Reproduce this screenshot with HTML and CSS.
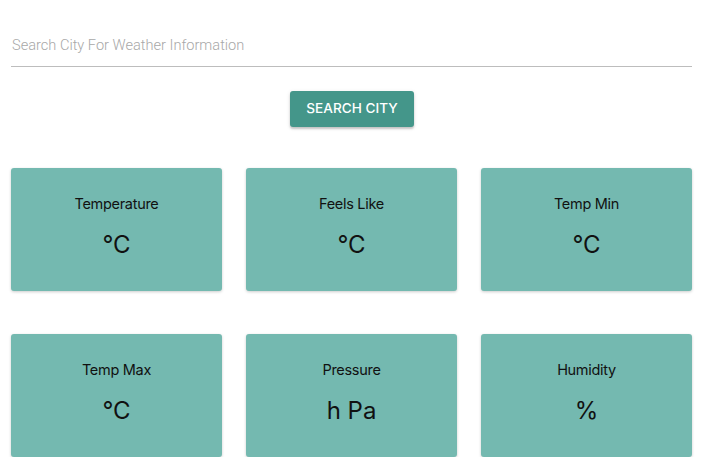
FILE: index.html
```html
<!DOCTYPE html>
<html>
<head>
<meta charset="utf-8">
<link rel="stylesheet" href="styles.css">
</head>
<body>
<div class="page">
  <div class="field">
    <input class="search" type="text" placeholder="Search City For Weather Information">
  </div>
  <div class="actions">
    <button class="btn">SEARCH CITY</button>
  </div>
  <div class="grid">
    <div class="card"><div class="label">Temperature</div><div class="value">°C</div></div>
    <div class="card"><div class="label">Feels Like</div><div class="value">°C</div></div>
    <div class="card"><div class="label">Temp Min</div><div class="value">°C</div></div>
    <div class="card"><div class="label">Temp Max</div><div class="value">°C</div></div>
    <div class="card"><div class="label">Pressure</div><div class="value">h Pa</div></div>
    <div class="card"><div class="label">Humidity</div><div class="value">%</div></div>
  </div>
</div>
</body>
</html>
```
FILE: styles.css
```css
* { box-sizing: border-box; }
body { margin: 0; background: #fff; font-family: Roboto, "Liberation Sans", sans-serif; }
.page { padding: 28px 13px 0 11px; }
.field { border-bottom: 1px solid #bdbdbd; }
.search {
  width: 100%; border: none; outline: none; background: transparent;
  font-family: Roboto, sans-serif; font-size: 14.6px; font-weight: 300; color: #333;
  padding: 8px 0 12px 1px; height: 38px;
}
.search::placeholder { color: #a8a8a8; }
.actions { display: flex; justify-content: center; padding-top: 24px; }
.btn {
  background: #44968a; color: #fff; border: none; border-radius: 3px;
  font-family: Inter, "Liberation Sans", sans-serif; font-weight: 500; font-size: 13.6px; letter-spacing: 0;
  width: 124px; height: 36px; margin-left: 1px; padding: 0 0 2px;
  box-shadow: 0 2px 2px rgba(0,0,0,0.18), 0 1px 4px rgba(0,0,0,0.1);
}
.grid {
  display: grid; grid-template-columns: repeat(3, 211px); column-gap: 24px; row-gap: 43px;
  margin-top: 41px;
}
.card {
  background: #74b9b0; border-radius: 3px; height: 123px;
  box-shadow: 0 1px 3px rgba(0,0,0,0.2);
  display: flex; flex-direction: column; align-items: center;
  font-family: Inter, "Liberation Sans", sans-serif; color: #111;
  padding-top: 27px;
}
.label { font-size: 14.5px; line-height: 18px; letter-spacing: -0.3px; }
.value { font-size: 24px; line-height: 28px; margin-top: 18px; }
```
